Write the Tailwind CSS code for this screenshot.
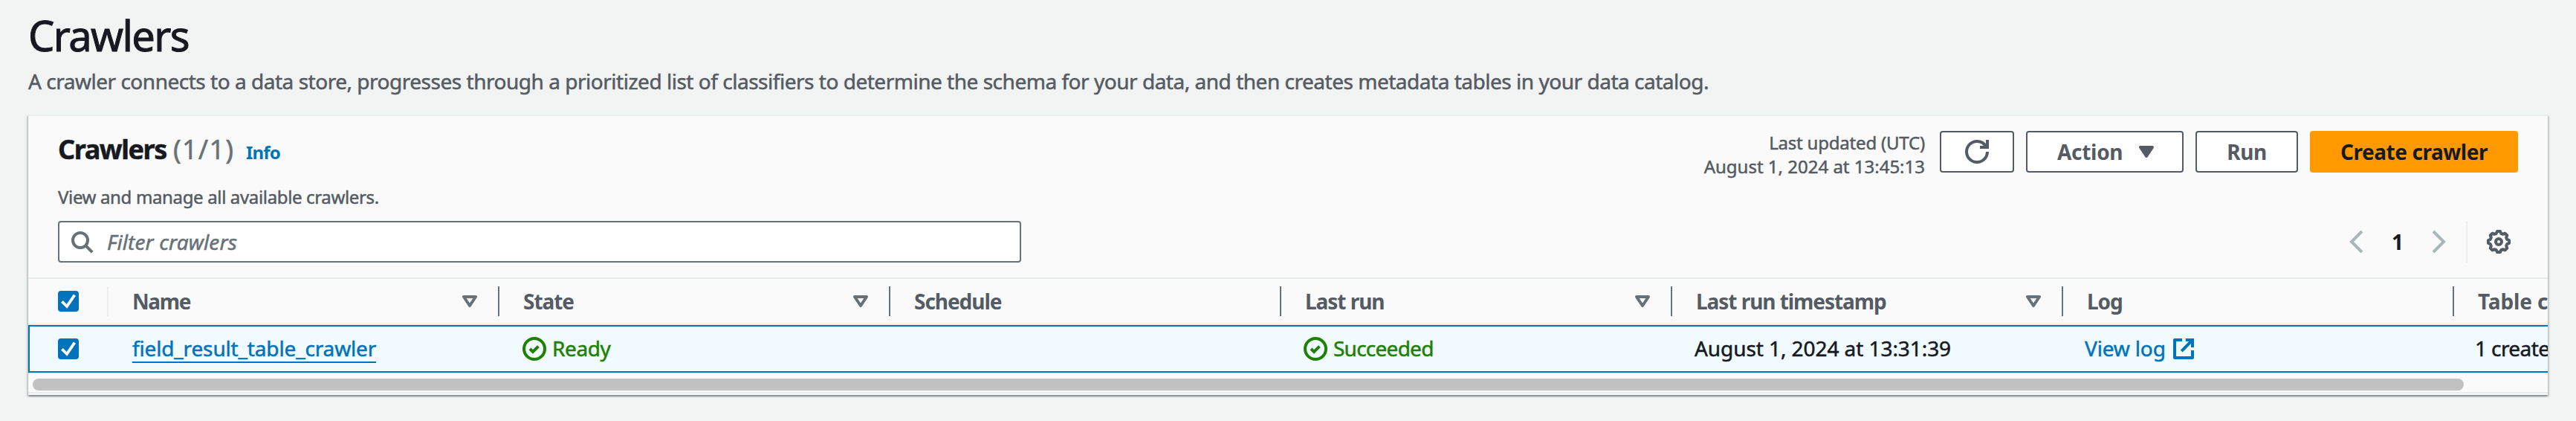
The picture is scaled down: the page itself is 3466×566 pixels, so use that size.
<!DOCTYPE html>
<html lang="en">
<head>
<meta charset="utf-8">
<title>Crawlers</title>
<script src="https://cdn.jsdelivr.net/npm/@tailwindcss/browser@4"></script>
</head>
<body class="bg-[#f2f3f3] font-['Noto_Sans',sans-serif] text-[28px] text-[#16191f] [-webkit-text-stroke:0.5px] w-[3466px] h-[566px] overflow-hidden pt-[11px] pl-[38px]">
<svg class="hidden">
  <symbol id="sort" viewBox="0 0 16 16"><path d="M4 5h8l-4 6z" fill="none" stroke="currentColor" stroke-width="2" stroke-linejoin="round"/></symbol>
  <symbol id="ok" viewBox="0 0 16 16"><g fill="none" stroke="currentColor" stroke-width="2"><circle cx="8" cy="8" r="7"/><path d="m5 8 2 2 3.7-3.7"/></g></symbol>
  <symbol id="check" viewBox="0 0 14 14"><path d="M2.7 7.2 6 10.4 11.2 2.8" fill="none" stroke="#fff" stroke-width="1.9"/></symbol>
</svg>

<h1 class="text-[56px] leading-[72px] tracking-[-1.6px] pl-[-2px] [-webkit-text-stroke:1px]">Crawlers</h1>
<p class="mt-[4px] leading-[44px] tracking-[-0.48px] text-[#545b64] whitespace-nowrap">A crawler connects to a data store, progresses through a prioritized list of classifiers to determine the schema for your data, and then creates metadata tables in your data catalog.</p>

<section class="mt-[23px] w-[3390px] h-[377px] border-t-2 border-[#eaeded] bg-[#fafafa] shadow-[0_2px_2px_0_rgba(0,28,36,0.3),2px_2px_2px_0_rgba(0,28,36,0.15),-2px_2px_2px_0_rgba(0,28,36,0.15)]">
  <header class="h-[219px] border-b-2 border-[#eaeded] px-[40px]">
    <div class="flex justify-between items-start h-[141px]">
      <div class="pt-[23px]">
        <div class="flex items-baseline h-[44px] leading-[44px]">
          <h2 class="text-[36px] font-bold tracking-[-1.41px] w-[155px] whitespace-nowrap">Crawlers</h2>
          <span class="text-[36px] tracking-[1.2px] w-[98px] text-[#687078]">(1/1)</span>
          <a class="text-[24px] font-bold tracking-[-0.8px] text-[#0073bb] [-webkit-text-stroke:0]">Info</a>
        </div>
        <p class="mt-[26px] text-[24px] leading-[32px] tracking-[-0.35px] text-[#545b64]">View and manage all available crawlers.</p>
      </div>
      <div class="flex pt-[20px] text-[#545b64] font-bold">
        <div class="text-[24px] leading-[32px] font-normal text-right mr-[20px]"><span class="tracking-[-0.2px]">Last updated (UTC)</span><br>August 1, 2024 at 13:45:13</div>
        <button class="w-[100px] h-[56px] mr-[16px] border-2 border-[#545b64] rounded-[4px] bg-white flex items-center justify-center">
          <svg class="w-[32px] h-[32px]" viewBox="0 0 16 16" fill="none" stroke="currentColor" stroke-width="2"><path d="M15 8c0 3.87-3.13 7-7 7s-7-3.13-7-7 3.13-7 7-7c2.79 0 5.2 1.63 6.33 4"/><path d="M10 5h5V0"/></svg>
        </button>
        <button class="w-[212px] h-[56px] mr-[16px] border-2 border-[#545b64] rounded-[4px] bg-white flex items-center pl-[40px] tracking-[-0.3px] [-webkit-text-stroke:0]">
          <span class="w-[104px] text-left">Action</span>
          <svg class="w-[32px] h-[32px]" viewBox="0 0 16 16"><path d="M4 5h8l-4 6z" fill="currentColor" stroke="currentColor" stroke-width="2" stroke-linejoin="round"/></svg>
        </button>
        <button class="w-[138px] h-[56px] mr-[16px] border-2 border-[#545b64] rounded-[4px] bg-white tracking-[-0.4px] [-webkit-text-stroke:0]">Run</button>
        <button class="w-[280px] h-[56px] rounded-[4px] bg-[#ff9900] text-[#16191f] tracking-[-0.45px] [-webkit-text-stroke:0]">Create crawler</button>
      </div>
    </div>
    <div class="flex justify-between">
      <div class="w-[1296px] h-[56px] border-2 border-[#687078] rounded-[4px] bg-white flex items-center pl-[14px] text-[#687078]">
        <svg class="w-[32px] h-[32px]" viewBox="0 0 16 16" fill="none" stroke="currentColor" stroke-width="2"><circle cx="7" cy="7" r="5"/><path d="m10.5 10.5 4.6 4.6"/></svg>
        <span class="ml-[18px] italic tracking-[0.1px]">Filter crawlers</span>
      </div>
      <div class="flex items-center h-[56px]">
        <svg class="w-[32px] h-[32px] text-[#aab7b8]" viewBox="0 0 16 16" fill="none" stroke="currentColor" stroke-width="2"><path d="m12 1-7 7 7 7"/></svg>
        <span class="w-[80px] text-center font-bold [-webkit-text-stroke:0]">1</span>
        <svg class="w-[32px] h-[32px] text-[#aab7b8]" viewBox="0 0 16 16" fill="none" stroke="currentColor" stroke-width="2"><path d="m4 1 7 7-7 7"/></svg>
        <div class="ml-[20px] mr-[26px] w-[2px] h-[56px] bg-[#eaeded]"></div>
        <svg class="w-[32px] h-[32px] mr-[10px] text-[#545b64]" viewBox="0 0 16 16" fill="none" stroke="currentColor" stroke-width="2"><circle cx="8" cy="8" r="2"/><path stroke-linejoin="round" d="M6.4 2.4 7 1h2l.6 1.4 1.23.51 1.41-.57 1.42 1.42-.57 1.41.51 1.23L15 7v2l-1.4.6-.51 1.23.57 1.41-1.42 1.42-1.41-.57-1.23.51L9 15H7l-.6-1.4-1.23-.51-1.41.57-1.42-1.42.57-1.41-.51-1.23L1 9V7l1.4-.6.51-1.23-.57-1.41 1.42-1.42 1.41.57z"/></svg>
      </div>
    </div>
  </header>

  <div class="w-[3390px] overflow-hidden">
    <div class="flex items-center w-[3720px] h-[62px] border-b-2 border-[#eaeded] font-bold text-[#545b64] leading-[36px] tracking-[-1.05px] whitespace-nowrap [-webkit-text-stroke:0]">
      <div class="w-[108px] h-[40px] pl-[40px] flex items-center border-r-2 border-[#eaeded]"><svg class="w-[28px] h-[28px] rounded-[4px] bg-[#0073bb]"><use href="#check"/></svg></div>
      <div class="w-[526px] h-[40px] pl-[32px] pr-[22px] flex items-center justify-between border-r-2 border-[#687078]"><span class="-mt-[1px] tracking-[-1.39px]">Name</span><svg class="w-[32px] h-[32px] text-[#687078]"><use href="#sort"/></svg></div>
      <div class="w-[526px] h-[40px] pl-[32px] pr-[22px] flex items-center justify-between border-r-2 border-[#687078]"><span class="-mt-[1px]">State</span><svg class="w-[32px] h-[32px] text-[#687078]"><use href="#sort"/></svg></div>
      <div class="w-[526px] h-[40px] pl-[32px] flex items-center border-r-2 border-[#687078]"><span class="-mt-[1px]">Schedule</span></div>
      <div class="w-[526px] h-[40px] pl-[32px] pr-[22px] flex items-center justify-between border-r-2 border-[#687078]"><span class="-mt-[1px]">Last run</span><svg class="w-[32px] h-[32px] text-[#687078]"><use href="#sort"/></svg></div>
      <div class="w-[526px] h-[40px] pl-[32px] pr-[22px] flex items-center justify-between border-r-2 border-[#687078]"><span class="-mt-[1px]">Last run timestamp</span><svg class="w-[32px] h-[32px] text-[#687078]"><use href="#sort"/></svg></div>
      <div class="w-[526px] h-[40px] pl-[32px] flex items-center border-r-2 border-[#687078]"><span class="-mt-[1px]">Log</span></div>
      <div class="w-[418px] h-[40px] pl-[32px] flex items-center"><span class="-mt-[1px] tracking-[-0.1px]">Table changes</span></div>
    </div>
    <div class="flex items-center w-[3720px] h-[64px] border-2 border-[#0073bb] bg-[#f1faff] leading-[36px] whitespace-nowrap">
      <div class="w-[106px] pl-[38px]"><svg class="w-[28px] h-[28px] rounded-[4px] bg-[#0073bb]"><use href="#check"/></svg></div>
      <div class="w-[526px] pl-[32px] h-[38px] text-[#0073bb]"><a class="inline-block h-[38px] border-b-2 border-[#0073bb] tracking-[-0.15px]">field_result_table_crawler</a></div>
      <div class="w-[526px] pl-[31px] flex items-center gap-[8px] text-[#1d8102]"><svg class="w-[32px] h-[32px]"><use href="#ok"/></svg><span class="-mt-[2px] tracking-[-0.4px]">Ready</span></div>
      <div class="w-[526px]"></div>
      <div class="w-[526px] pl-[30px] flex items-center gap-[8px] text-[#1d8102]"><svg class="w-[32px] h-[32px]"><use href="#ok"/></svg><span class="-mt-[2px] tracking-[-0.75px]">Succeeded</span></div>
      <div class="w-[526px] pl-[30px] -mt-[2px] tracking-[-0.07px]">August 1, 2024 at 13:31:39</div>
      <div class="w-[526px] pl-[29px] flex items-center text-[#0073bb]"><span class="-mt-[2px] w-[117px] tracking-[-0.15px]">View log</span><svg class="w-[32px] h-[32px]" viewBox="0 0 16 16" fill="none" stroke="currentColor" stroke-width="2"><path stroke-linejoin="round" d="M7 2H2v12h12V9"/><path d="M9.4 2H14v5M14 2 6.6 9.6"/></svg></div>
      <div class="pl-[28px] -mt-[2px] tracking-[-0.6px]">1 created</div>
    </div>
  </div>
  <div class="h-[28px] border-y-2 border-[#eaeded] pl-[6px] pt-[6px]">
    <div class="w-[3271px] h-[16px] rounded-[8px] bg-[#c1c1c1]"></div>
  </div>
</section>
</body>
</html>
